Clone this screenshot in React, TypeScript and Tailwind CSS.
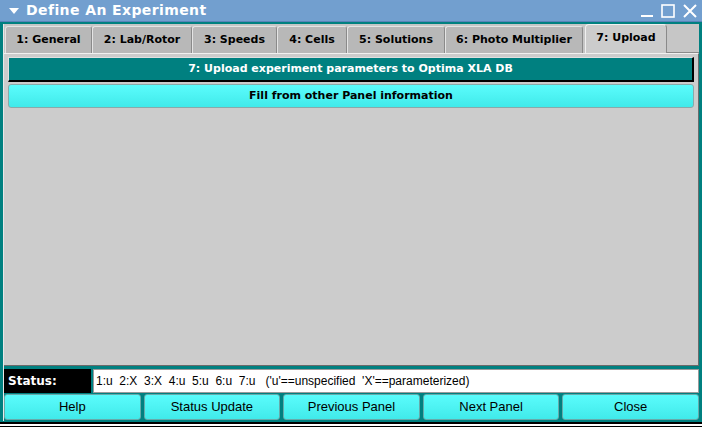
const TABS = [
  { label: "1: General", w: "w-[87px]" },
  { label: "2: Lab/Rotor", w: "w-[100px]" },
  { label: "3: Speeds", w: "w-[85px]" },
  { label: "4: Cells", w: "w-[70px]" },
  { label: "5: Solutions", w: "w-[98px]" },
  { label: "6: Photo Multiplier", w: "w-[138px]" },
];

const BUTTONS = ["Help", "Status Update", "Previous Panel", "Next Panel", "Close"];

export default function App() {
  return (
    <div className="w-[702px] h-[427px] flex flex-col bg-[#008080] overflow-hidden">
      {/* Title bar */}
      <div className="h-[22px] flex items-center bg-[#729fcf] border-b border-[#5a84b8] pl-[8px] pr-[4px] text-white font-['DejaVu_Sans',sans-serif]">
        <svg width="12" height="10" viewBox="0 0 12 10" className="mr-[6px]">
          <polygon points="1,2 11,2 6,8" fill="white" />
        </svg>
        <span className="font-bold text-[14px] tracking-[0.4px]">Define An Experiment</span>
        <div className="ml-auto flex items-center gap-[6px]">
          <svg width="14" height="14" viewBox="0 0 14 14">
            <rect x="1" y="11" width="12" height="2" fill="white" />
          </svg>
          <svg width="16" height="16" viewBox="0 0 16 16">
            <rect x="2" y="2" width="12" height="12" fill="none" stroke="white" strokeWidth="1.6" />
          </svg>
          <svg width="16" height="16" viewBox="0 0 16 16">
            <path d="M2 2 L14 14 M14 2 L2 14" stroke="white" strokeWidth="2" />
          </svg>
        </div>
      </div>

      {/* Window body */}
      <div className="flex-1 flex flex-col px-[3px] pt-[2px] pb-[1px]">
        <div className="flex-1 flex flex-col bg-[#c6c6c6] border-l border-[#e8e8e8] font-['DejaVu_Sans',sans-serif]">
          {/* Tabs */}
          <div className="h-[29px] flex items-end pl-[1px]">
            {TABS.map((t) => (
              <div
                key={t.label}
                className={`${t.w} h-[27px] flex items-center justify-center bg-[#b8b8b8] border-t border-l border-[#e4e4e4] border-r border-r-[#8a8a8a] rounded-t-[3px] text-[11px] font-bold text-black`}
              >
                {t.label}
              </div>
            ))}
            <div className="w-[82px] h-[29px] ml-[2px] flex items-center justify-center bg-[#cccccc] border-t border-l border-[#f0f0f0] border-r border-r-[#8a8a8a] rounded-t-[4px] text-[11px] font-bold text-black pb-[2px]">
              7: Upload
            </div>
            <div className="flex-1 h-[29px] border-b border-[#8a8a8a]" />
          </div>

          {/* Panel */}
          <div className="flex-1 flex flex-col bg-[#cccccc] border-t border-[#f0f0f0] border-r border-r-[#6a6a6a] border-b border-b-[#6a6a6a] px-[4px] pt-[3px] gap-[2px]">
            <div className="h-[25px] flex items-center justify-center bg-[#008080] border-t border-l border-[#e0e0e0] border-r-[2px] border-b-[2px] border-r-black border-b-black text-white text-[11px] font-bold">
              7: Upload experiment parameters to Optima XLA DB
            </div>
            <div className="h-[24px] flex items-center justify-center bg-gradient-to-b from-[#5afcfc] to-[#40eaea] border border-[#8aa] rounded-[3px] text-black text-[11px] font-bold">
              Fill from other Panel information
            </div>
          </div>

          {/* Status row */}
          <div className="h-[28px] flex items-stretch bg-[#008080] pt-[3px] pb-[1px] gap-[2px]">
            <div className="w-[87px] flex items-center bg-black text-white text-[12px] font-bold pl-[4px]">
              Status:
            </div>
            <div className="flex-1 flex items-center bg-white border border-[#9a9a9a] pl-[2px] text-[12px] text-black font-['Liberation_Sans',sans-serif] whitespace-pre">
              {"1:u  2:X  3:X  4:u  5:u  6:u  7:u   ('u'==unspecified  'X'==parameterized)"}
            </div>
          </div>

          {/* Bottom buttons */}
          <div className="h-[27px] flex bg-[#008080] gap-[3px] pb-[1px]">
            {BUTTONS.map((b) => (
              <div
                key={b}
                className="flex-1 flex items-center justify-center bg-gradient-to-b from-[#5afcfc] to-[#40eaea] border border-[#6aa] rounded-[3px] text-black text-[13px] font-['Liberation_Sans',sans-serif]"
              >
                {b}
              </div>
            ))}
          </div>
        </div>
      </div>
      <div className="h-[5px] bg-white border-t-[2px] border-black border-b border-b-black" />
    </div>
  );
}
